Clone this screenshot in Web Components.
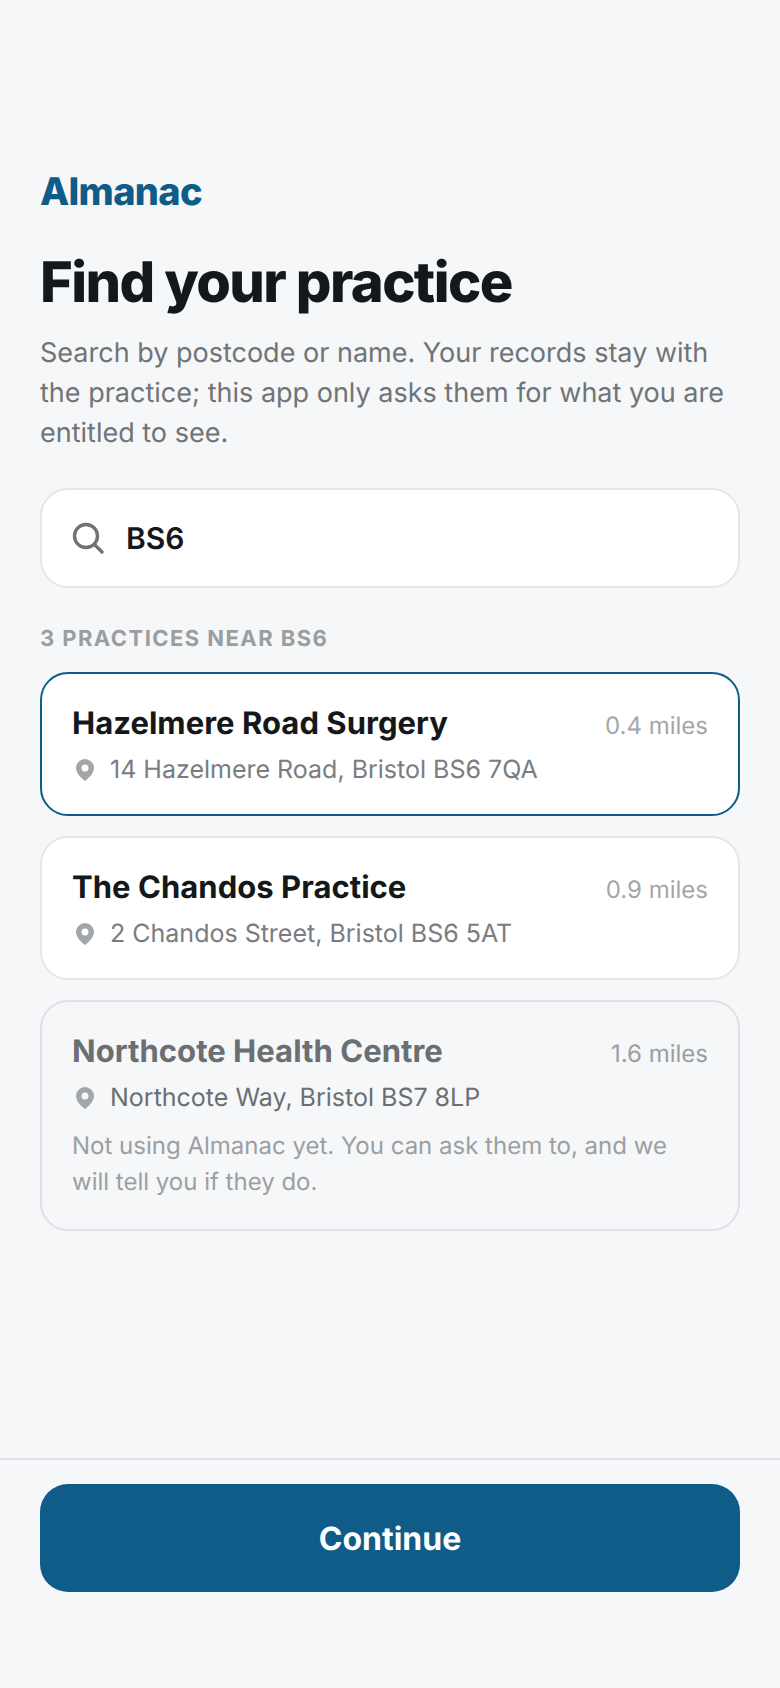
<!DOCTYPE html>
<html lang="en">
<head>
<meta charset="utf-8">
<title>Almanac</title>
<style>
  html, body { margin: 0; height: 100%; }
  body { background: #f5f7f9; font-family: Inter, "Liberation Sans", sans-serif; text-rendering: geometricPrecision; }
</style>
</head>
<body>
<practice-screen>
  <span slot="brand">Almanac</span>
  <span slot="title">Find your practice</span>
  <span slot="intro">Search by postcode or name. Your records stay with the practice; this app only asks them for what you are entitled to see.</span>
  <search-box slot="search" value="BS6"></search-box>
  <span slot="label">3 PRACTICES NEAR BS6</span>
  <practice-card slot="list" selected name="Hazelmere Road Surgery" distance="0.4 miles" address="14 Hazelmere Road, Bristol BS6 7QA"></practice-card>
  <practice-card slot="list" name="The Chandos Practice" distance="0.9 miles" address="2 Chandos Street, Bristol BS6 5AT"></practice-card>
  <practice-card slot="list" inactive name="Northcote Health Centre" distance="1.6 miles" address="Northcote Way, Bristol BS7 8LP">Not using Almanac yet. You can ask them to, and we will tell you if they do.</practice-card>
  <primary-button slot="action">Continue</primary-button>
</practice-screen>

<script>
;(function () {
  "use strict"

  function shadow(host, html) {
    host.attachShadow({ mode: "open" }).innerHTML = html
  }

  class PracticeScreen extends HTMLElement {
    constructor() {
      super()
      shadow(this, `<style>
        :host { display: flex; flex-direction: column; height: 1688px; box-sizing: border-box; color: #14181b; }
        main { flex: 1; padding: 170px 40px 0; }
        .brand { font-size: 38px; line-height: 44px; font-weight: 800; color: #0f5c88; letter-spacing: -0.7px; }
        h1 { margin: 34px 0 0; font-size: 56px; line-height: 68px; font-weight: 800; letter-spacing: -1.6px; }
        p { margin: 17px 0 0; font-size: 27px; line-height: 40px; color: #707477; }
        .search { display: block; margin-top: 35px; }
        .label { margin-top: 37px; font-size: 22px; line-height: 28px; font-weight: 700; letter-spacing: 1.44px; color: #9a9ea1; }
        .list { margin-top: 19px; display: flex; flex-direction: column; gap: 20px; }
        footer { border-top: 2px solid #e0e2e5; padding: 24px 40px 96px; }
      </style>
      <main>
        <div class="brand"><slot name="brand"></slot></div>
        <h1><slot name="title"></slot></h1>
        <p><slot name="intro"></slot></p>
        <div class="search"><slot name="search"></slot></div>
        <div class="label"><slot name="label"></slot></div>
        <div class="list"><slot name="list"></slot></div>
      </main>
      <footer><slot name="action"></slot></footer>`)
    }
  }

  class SearchBox extends HTMLElement {
    constructor() {
      super()
      shadow(this, `<style>
        :host { display: block; }
        .box { display: flex; align-items: center; gap: 22px; height: 100px; box-sizing: border-box; padding: 0 30px; background: #fff; border: 2px solid #e4e6e8; border-radius: 28px; }
        svg { width: 32px; height: 32px; flex: none; }
        span { padding-top: 2px; font-size: 30px; font-weight: 600; color: #14181b; }
      </style>
      <div class="box">
        <svg viewBox="0 0 32 32" fill="none" stroke="#6f7376" stroke-width="3.4" stroke-linecap="round"><circle cx="14" cy="14" r="11.5"/><path d="M22.500 22.500l7.500 7.500"/></svg>
        <span>${this.getAttribute("value")}</span>
      </div>`)
    }
  }

  class PracticeCard extends HTMLElement {
    constructor() {
      super()
      shadow(this, `<style>
        :host { display: block; }
        .card { box-sizing: border-box; padding: 31px 30px 25px; background: #fff; border: 2px solid #e4e6e8; border-radius: 28px; }
        :host([selected]) .card { border-color: #0f5c88; }
        :host([inactive]) .card { background: transparent; border-color: #dfe1e4; }
        .top { display: flex; justify-content: space-between; align-items: baseline; }
        .name { font-size: 31px; line-height: 38px; font-weight: 700; letter-spacing: 0.04px; color: #14181b; }
        :host([inactive]) .name { color: #6b6f72; }
        .miles { font-size: 24px; color: #a3a6a9; }
        :host([inactive]) .miles { color: #9a9ea1; }
        .addr { display: flex; align-items: center; gap: 14px; margin-top: 8px; font-size: 25px; line-height: 38px; color: #7a7d80; }
        :host([inactive]) .addr { color: #6b6f72; }
        svg { width: 24px; height: 24px; flex: none; }
        .note { font-size: 24px; line-height: 36px; color: #9b9fa2; margin: 11px 0 4px; }
        .note.empty { display: none; }
      </style>
      <div class="card">
        <div class="top"><span class="name">${this.getAttribute("name")}</span><span class="miles">${this.getAttribute("distance")}</span></div>
        <div class="addr">
          <svg viewBox="-1 0 24 24"><path fill="#a3a6a9" fill-rule="evenodd" d="M12 1a9 9 0 0 0-9 9c0 6 7 11.600 9 13 2-1.400 9-7 9-13a9 9 0 0 0-9-9zm0 5.500a3.500 3.500 0 1 1 0 7 3.500 3.500 0 0 1 0-7z"/></svg>
          <span>${this.getAttribute("address")}</span>
        </div>
        <div class="note ${this.textContent.trim() ? "" : "empty"}"><slot></slot></div>
      </div>`)
    }
  }

  class PrimaryButton extends HTMLElement {
    constructor() {
      super()
      shadow(this, `<style>
        :host { display: block; }
        button { display: block; width: 100%; height: 108px; border: 0; border-radius: 28px; background: #0f5c88; color: #fff; font: 700 32px Inter, "Liberation Sans", sans-serif; text-rendering: geometricPrecision; }
      </style>
      <button type="button"><slot></slot></button>`)
    }
  }

  customElements.define("practice-screen", PracticeScreen)
  customElements.define("search-box", SearchBox)
  customElements.define("practice-card", PracticeCard)
  customElements.define("primary-button", PrimaryButton)
})()
</script>
</body>
</html>
